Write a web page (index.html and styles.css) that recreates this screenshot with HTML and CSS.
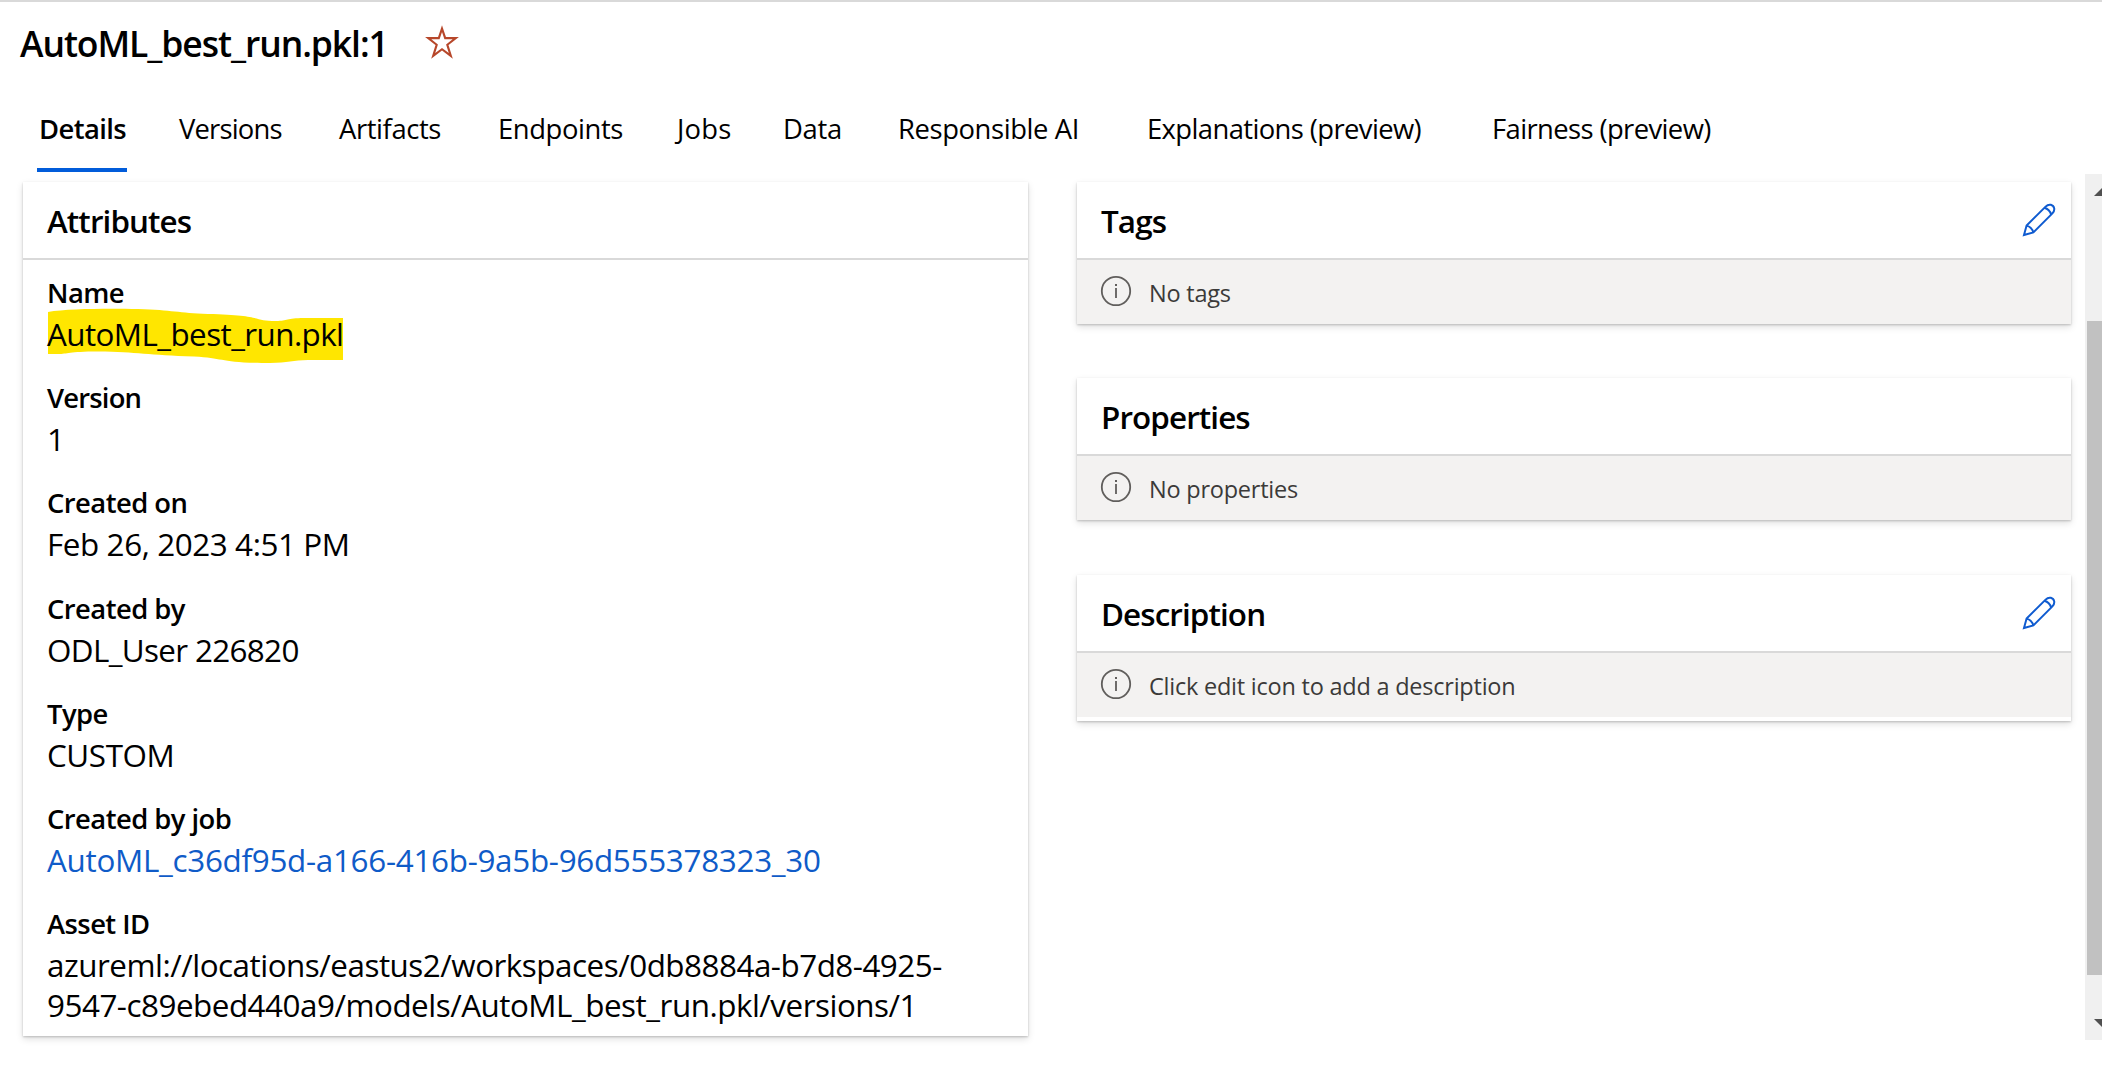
FILE: index.html
```
<!DOCTYPE html>
<html lang="en">
<head>
<meta charset="utf-8">
<title>AutoML_best_run.pkl:1</title>
<link rel="stylesheet" href="styles.css">
</head>
<body>
<svg class="defs" width="0" height="0" aria-hidden="true">
  <symbol id="pencil" viewBox="0 0 34 34">
    <path d="M2 32 L4.6 22.6 L23.6 3.6 Q26 1.2 28.8 1.8 Q31.6 2.6 32.2 5.4 Q32.6 8 30.4 10.4 L11.4 29.4 Z M4.6 22.6 Q9.8 24 11.4 29.4 M22.4 4.8 Q27.6 6.4 29.2 11.6" fill="none" stroke="currentColor" stroke-width="2"/>
  </symbol>
  <symbol id="info" viewBox="0 0 32 32">
    <circle cx="16" cy="16" r="14.2" fill="none" stroke="currentColor" stroke-width="1.8"/>
    <path d="M15.1 13h1.8v10h-1.8zM15 9h2v2h-2z" fill="currentColor"/>
  </symbol>
</svg>

<header class="page-header">
  <h1 class="title">AutoML_best_run.pkl:1</h1>
  <svg class="star" viewBox="0 0 32 32"><path d="M16 3.4 L19 12.4 H29 L21 18.6 L24.3 29 L16 22.8 L7.7 29 L11 18.6 L3 12.4 H13 Z" fill="none" stroke="currentColor" stroke-width="2"/></svg>
</header>

<nav class="tabs">
  <a class="tab tab-active">Details</a>
  <a class="tab tab-versions">Versions</a>
  <a class="tab">Artifacts</a>
  <a class="tab">Endpoints</a>
  <a class="tab tab-jobs">Jobs</a>
  <a class="tab tab-data">Data</a>
  <a class="tab">Responsible AI</a>
  <a class="tab tab-preview">Explanations (preview)</a>
  <a class="tab tab-preview">Fairness (preview)</a>
</nav>

<main class="content">
  <section class="card attributes">
    <h2 class="card-header">Attributes</h2>
    <dl class="attribute-list">
      <div class="attribute">
        <dt>Name</dt>
        <dd class="marked">
          <svg class="marker" viewBox="0 0 295 56"><path d="M0 4 C20 .5 60 .5 90 1 C125 2 130 5 160 6 C215 7 205 13 228 13 C240 13 238 10 256 10 H295 V52 H260 C245 52 240 55 222 55 C170 55 178 50 146 48.500 C100 47 90 44 50 43.500 C20 43.500 20 46 10 46 H0 Z" fill="#ffe600"/></svg>
          <span class="marked-text">AutoML_best_run.pkl</span>
        </dd>
      </div>
      <div class="attribute"><dt class="tight">Version</dt><dd>1</dd></div>
      <div class="attribute"><dt>Created on</dt><dd class="date">Feb 26, 2023 4:51 PM</dd></div>
      <div class="attribute"><dt>Created by</dt><dd class="user">ODL_User 226820</dd></div>
      <div class="attribute"><dt>Type</dt><dd class="kind">CUSTOM</dd></div>
      <div class="attribute"><dt>Created by job</dt><dd><a class="job-link">AutoML_c36df95d-a166-416b-9a5b-96d555378323_30</a></dd></div>
      <div class="attribute"><dt>Asset ID</dt><dd>azureml://locations/eastus2/workspaces/0db8884a-b7d8-4925-9547-c89ebed440a9/models/AutoML_best_run.pkl/versions/1</dd></div>
    </dl>
  </section>

  <div class="side">
    <section class="card">
      <h2 class="card-header">Tags <svg class="edit"><use href="#pencil"/></svg></h2>
      <p class="empty"><svg class="info"><use href="#info"/></svg><span>No tags</span></p>
    </section>
    <section class="card">
      <h2 class="card-header">Properties</h2>
      <p class="empty"><svg class="info"><use href="#info"/></svg><span>No properties</span></p>
    </section>
    <section class="card description">
      <h2 class="card-header">Description <svg class="edit"><use href="#pencil"/></svg></h2>
      <p class="empty"><svg class="info"><use href="#info"/></svg><span>Click edit icon to add a description</span></p>
    </section>
  </div>

  <div class="scrollbar">
    <span class="arrow arrow-up"></span>
    <span class="thumb"></span>
    <span class="arrow arrow-down"></span>
  </div>
</main>
</body>
</html>
```
FILE: styles.css
```
* { box-sizing: border-box; }

body {
  margin: 0;
  height: 1076px;
  overflow: hidden;
  border-top: 2px solid #d9d9d9;
  background: #fff;
  color: #000;
  font-family: "Open Sans", "Noto Sans", sans-serif;
}

h1, h2, p, dl, dd { margin: 0; }
.defs { display: block; position: absolute; }

.page-header {
  display: flex;
  align-items: center;
  gap: 37px;
  height: 65px;
  padding: 17px 0 0 20px;
}
.title {
  font-size: 35.5px;
  font-weight: 600;
  line-height: 48px;
  letter-spacing: -1.07px;
}
.star { width: 34px; height: 34px; margin-top: -3px; color: #b7472a; }

.tabs {
  display: grid;
  grid-template-columns: 142px 160px 159px 179px 106px 115px 249px 345px auto;
  justify-content: start;
  justify-items: start;
  margin-top: 41px;
  padding-left: 37px;
}
.tab {
  height: 64px;
  padding-top: 1px;
  font-size: 27.4px;
  line-height: 40px;
  letter-spacing: -0.4px;
  white-space: nowrap;
}
.tab-active {
  width: 90px;
  padding-left: 2px;
  border-bottom: 4px solid #015cda;
  font-weight: 600;
  letter-spacing: -0.6px;
}
.tab-versions { letter-spacing: -0.8px; }
.tab-jobs { letter-spacing: 0.2px; }
.tab-data { letter-spacing: -0.3px; }
.tab-preview { letter-spacing: -0.6px; }

.content {
  display: flex;
  align-items: flex-start;
  height: 866px;
  margin-top: 2px;
  padding-left: 23px;
}
.card {
  background: #fff;
  box-shadow: 0 3px 7px rgba(0, 0, 0, .13), 0 1px 2px rgba(0, 0, 0, .2);
}
.card-header {
  display: flex;
  align-items: center;
  justify-content: space-between;
  height: 78px;
  padding: 1px 15px 0 24px;
  border-bottom: 2px solid #d9d9d9;
  font-size: 31.4px;
  font-weight: 600;
  line-height: 74px;
  letter-spacing: -0.9px;
}
.edit { width: 34px; height: 34px; margin-top: -2px; color: #0f5bd0; }

.attributes { width: 1005px; height: 854px; margin-top: 8px; }
.attribute-list {
  display: flex;
  flex-direction: column;
  gap: 23.2px;
  padding: 12.1px 50px 0 24px;
}
.attribute dt {
  font-size: 27.4px;
  font-weight: 600;
  line-height: 42px;
  letter-spacing: -0.55px;
}
.attribute dt.tight { letter-spacing: -0.8px; }
.attribute dd {
  font-size: 31.4px;
  line-height: 40px;
  letter-spacing: -0.49px;
}
.attribute dd.marked { position: relative; letter-spacing: -0.58px; }
.marker { position: absolute; left: 1px; top: -6px; width: 295px; height: 56px; }
.marked-text { position: relative; }
.attribute dd.date { letter-spacing: -0.4px; }
.attribute dd.user { letter-spacing: -0.65px; }
.attribute dd.kind { letter-spacing: -0.4px; }
.job-link { color: #0f5bc8; letter-spacing: -0.29px; }

.side {
  display: flex;
  flex-direction: column;
  gap: 54px;
  width: 994px;
  margin: 8px 0 0 49px;
}
.description { margin-top: 1px; padding-bottom: 4px; }
.empty {
  display: flex;
  align-items: center;
  gap: 17px;
  height: 64px;
  padding-left: 23px;
  background: #f3f2f1;
  color: #3b3a39;
  font-size: 23.5px;
  letter-spacing: -0.23px;
}
.empty span { margin-top: 2px; }
.info { width: 32px; height: 32px; margin-top: -2px; color: #605e5c; }

.scrollbar {
  display: flex;
  flex-direction: column;
  align-items: flex-end;
  width: 17px;
  height: 866px;
  margin-left: 14px;
  background: #f0f0f0;
}
.arrow { width: 8px; height: 8px; background: #505050; }
.arrow-up { margin-top: 14px; clip-path: polygon(0 100%, 100% 0, 100% 100%); }
.thumb { width: 15px; height: 654px; margin: 125px 0 44px; background: #c1c1c1; }
.arrow-down { clip-path: polygon(0 0, 100% 0, 100% 100%); }
```
